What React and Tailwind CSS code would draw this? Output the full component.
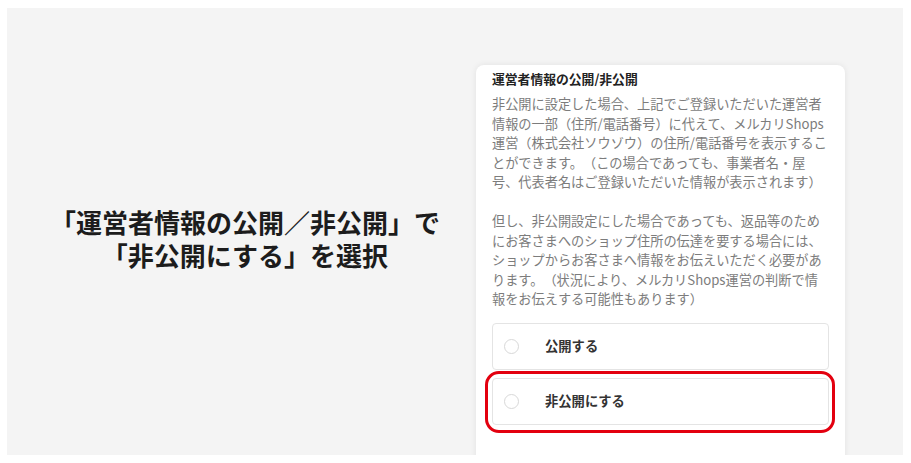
import React from 'react';

const jp = { fontFamily: '"Noto Sans CJK JP", "Noto Sans", sans-serif' };

function RadioOption({ label, highlighted }) {
  return (
    <div className="relative">
      <div className="h-[47px] flex items-center pl-[11px] border border-[#e4e4e4] rounded-[4px] bg-white">
        <span className="w-[15px] h-[15px] rounded-full border border-[#d8d8d8] bg-white shrink-0"></span>
        <span className="ml-[26px] text-[13.3px] font-bold text-[#333]">{label}</span>
      </div>
      {highlighted && (
        <div className="absolute -left-[7px] -right-[6px] -top-[7px] -bottom-[8px] border-[3px] border-[#e3000f] rounded-[14px] pointer-events-none"></div>
      )}
    </div>
  );
}

export default function App() {
  return (
    <div className="w-[911px] h-[463px] bg-white pt-[8px] pl-[7px] pr-[8px] pb-[8px] overflow-hidden [text-spacing-trim:space-all]" style={jp}>
      <div className="h-[447px] bg-[#f4f4f4] flex overflow-hidden">
        <div className="w-[484px] shrink-0 flex flex-col items-center pt-[197px] pr-[8px] text-[#1c1c1c] font-bold text-[26px] leading-[33px]">
          <p>「運営者情報の公開／非公開」で</p>
          <p>「非公開にする」を選択</p>
        </div>
        <div className="ml-[-15px] mt-[57px] w-[369px] h-[400px] bg-white rounded-t-[8px] shadow-[0_0_6px_rgba(0,0,0,0.08)] px-[16px] pt-[5px]">
          <h2 className="text-[12.8px] leading-[18px] font-bold text-[#222]">運営者情報の公開/非公開</h2>
          <p className="mt-[6px] text-[13.2px] leading-[19.5px] text-[#7c7c7c] whitespace-nowrap">
            非公開に設定した場合、上記でご登録いただいた運営者<br />
            情報の一部（住所/電話番号）に代えて、メルカリShops<br />
            運営（株式会社ソウゾウ）の住所/電話番号を表示するこ<br />
            とができます。（この場合であっても、事業者名・屋<br />
            号、代表者名はご登録いただいた情報が表示されます）<br />
            <br />
            但し、非公開設定にした場合であっても、返品等のため<br />
            にお客さまへのショップ住所の伝達を要する場合には、<br />
            ショップからお客さまへ情報をお伝えいただく必要があ<br />
            ります。（状況により、メルカリShops運営の判断で情<br />
            報をお伝えする可能性もあります）
          </p>
          <div className="mt-[14px] flex flex-col gap-[8px]">
            <RadioOption label="公開する" />
            <RadioOption label="非公開にする" highlighted />
          </div>
        </div>
      </div>
    </div>
  );
}
